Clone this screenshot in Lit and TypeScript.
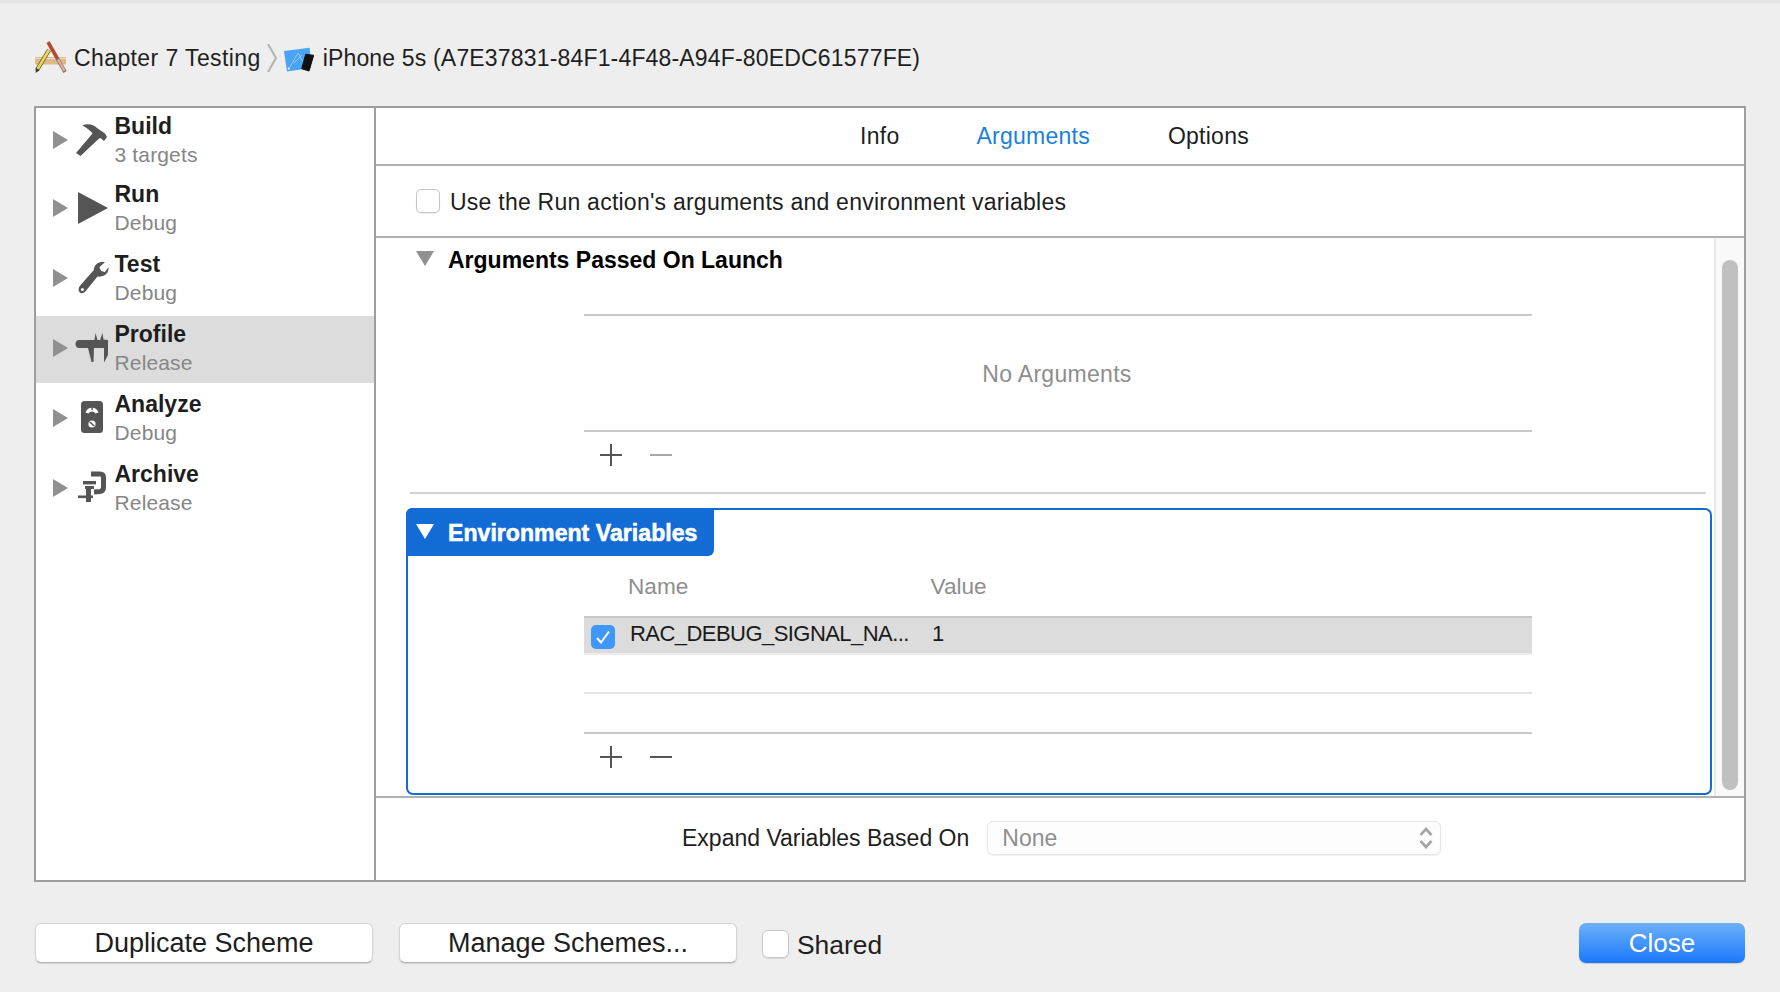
import { LitElement, html, css, svg } from "lit";
import { customElement } from "lit/decorators.js";

const DARK = "#555";
const icons: Record<string, unknown> = {
  build: svg`<path fill="${DARK}" d="M3 33 L19.5 13.5 C17 10 13 7.5 9.3 5.5 C14 3.2 20 4 24 8 L32 13.5 L34 17 L31 21 L27.5 18 L25.5 19 L7.5 36 Z"/>`,
  run: svg`<polygon fill="${DARK}" points="5,4 35,20 5,36"/>`,
  test: svg`<path transform="translate(1.5,2) scale(.92)" fill="${DARK}" d="M6 28 L21 11 C21 6 25 2 31 2 L33 2.5 L27 8 L29 12 L33 13 L37 8 C37.5 14 33 19 25 18 L12 34 C10 36.5 7 36.5 5.5 35 C4 33.5 4 30.5 6 28 Z"/><circle cx="9.4" cy="31.5" r="1.5" fill="#fff"/>`,
  profile: svg`<path fill="${DARK}" d="M6.5 12 H21.5 L22.5 5 L24.5 12 H27 L29.5 5 L30.5 11.5 L35 12 V27 L31 34.5 V20 H29 V20 H21 L20.5 34 H18.5 L15 20 H6.5 A4 4 0 0 1 6.5 12 Z"/><rect x="21" y="20" width="8" height="14" fill="#dcdcdc"/>`,
  analyze: svg`<rect x="8" y="3" width="22" height="32" rx="3.5" fill="${DARK}"/><path fill="#fff" d="M12.5 14.5 A6.8 6.8 0 0 1 25.5 14.5 L22.5 15.5 A4 4 0 0 0 15.5 15.5 Z"/><rect x="18.4" y="8" width="1.4" height="4" fill="${DARK}"/><circle cx="19" cy="26" r="3.6" fill="#fff"/><path d="M16.6 24 L21.4 28" stroke="${DARK}" stroke-width="1.5"/>`,
  archive: svg`<path fill="none" stroke="${DARK}" stroke-width="5" d="M18 6 H27 Q30.5 6 30.5 9.5 V19 Q30.5 23 27 23.5 L21 24"/><rect x="10" y="13" width="13" height="3.4" fill="${DARK}"/><rect x="12" y="18" width="9" height="3" fill="${DARK}"/><rect x="13" y="20" width="5" height="14" fill="${DARK}"/><rect x="5" y="27.5" width="15" height="2.6" fill="${DARK}"/>`,
};

const rows = [
  { id: "build", title: "Build", sub: "3 targets" },
  { id: "run", title: "Run", sub: "Debug" },
  { id: "test", title: "Test", sub: "Debug" },
  { id: "profile", title: "Profile", sub: "Release", selected: true },
  { id: "analyze", title: "Analyze", sub: "Debug" },
  { id: "archive", title: "Archive", sub: "Release" },
];

@customElement("app-root")
export class AppRoot extends LitElement {
  static styles = css`
    :host {
      display: block;
      width: 1780px;
      height: 992px;
      overflow: hidden;
      background: #eeeeee;
      font-family: "Liberation Sans", Arial, sans-serif;
      font-size: 23px;
      color: #1e1e1e;
    }
    * { box-sizing: border-box; }
    .strip { height: 3px; background: #e4e4e4; }
    .crumbs {
      height: 103px;
      padding: 37px 0 0 34px;
      display: flex;
      align-items: flex-start;
      line-height: 36px;
      white-space: nowrap;
    }
    .crumbs svg { display: block; flex: none; }
    .xc { width: 34px; height: 34px; margin: 1px 6px 0 0; }
    .chev { width: 10px; height: 28px; margin: 4px 7px 0 6px; }
    .bp { width: 30px; height: 26px; margin: 7px 9px 0 0; }
    .c1 { letter-spacing: 0.4px; }
    .c2 { letter-spacing: 0.17px; }

    .panel {
      margin-left: 34px;
      width: 1712px;
      height: 776px;
      border: 2px solid #9e9e9e;
      background: #fff;
      display: flex;
    }
    .side {
      width: 340px;
      flex: none;
      border-right: 2px solid #9e9e9e;
    }
    .row {
      height: 67px;
      margin-bottom: 3px;
      display: flex;
      align-items: center;
      padding-left: 17px;
    }
    .row:first-child { margin-bottom: 1px; }
    .row.on { background: #dcdcdc; }
    .row .tri { width: 15px; height: 18px; flex: none; margin-top: -2.8px; }
    .row .ic { width: 40px; height: 40px; flex: none; margin: -2.8px 0 0 5px; }
    .row .tx { margin: -3px 0 0 1.5px; display: flex; flex-direction: column; }
    .row b { font-size: 23px; line-height: 28px; color: #1e1e1e; }
    .row span { font-size: 21px; line-height: 28px; margin-top: 1px; color: #868686; letter-spacing: 0.15px; }

    .main { flex: 1; min-width: 0; display: flex; flex-direction: column; }
    .tabs {
      height: 58px;
      flex: none;
      border-bottom: 2px solid #b0b0b0;
      display: flex;
      justify-content: center;
      align-items: center;
      gap: 77px;
      padding-right: 11px;
      letter-spacing: 0.25px;
    }
    .tabs span:last-child { margin-left: 1px; }
    .tabs .on { color: #1b7fdc; }
    .use {
      height: 72px;
      flex: none;
      border-bottom: 2px solid #b0b0b0;
      display: flex;
      align-items: center;
      padding-left: 40px;
      gap: 10px;
    }
    .use span { letter-spacing: 0.24px; margin-top: 2px; }
    .box {
      width: 24px;
      height: 24px;
      flex: none;
      border-radius: 5px;
      background: #fff;
      border: 1.5px solid #c6c6c6;
      box-shadow: 0 1px 1px rgba(0,0,0,.08);
    }
    .scroll { height: 558px; flex: none; display: flex; }
    .content { flex: 1; min-width: 0; }
    .track {
      width: 30px;
      flex: none;
      background: #f9f9f9;
      border-left: 2px solid #e8e8e8;
      padding: 22px 0 0 6px;
    }
    .thumb { width: 16px; height: 530px; border-radius: 8px; background: #c0c0c0; }

    .shead {
      height: 44px;
      display: flex;
      align-items: center;
      padding-left: 40px;
      gap: 14px;
      font-weight: 700;
      color: #000;
    }
    .shead svg { width: 18px; height: 15px; flex: none; margin-top: -4px; }
    .tbl { margin-left: 208px; width: 948px; margin-top: 32px; }
    .empty {
      height: 118px;
      border-top: 2px solid #c8c8c8;
      border-bottom: 2px solid #c8c8c8;
      display: flex;
      align-items: center;
      justify-content: center;
      color: #8e8e8e;
      font-size: 23px;
      letter-spacing: 0.3px;
      padding: 3px 2px 0 0;
    }
    .pm { display: flex; gap: 28px; padding: 12px 0 0 16px; }
    .pm svg { width: 22px; height: 22px; display: block; }
    .div { margin: 26px 0 0 34px; width: 1296px; height: 2px; background: #d2d2d2; }

    .env {
      margin: 14px 0 0 30px;
      width: 1306px;
      height: 287px;
      border: 2px solid #136bd6;
      border-radius: 7px;
    }
    .ehead {
      margin: -2px 0 0 -2px;
      width: 308px;
      height: 48px;
      background: #136bd6;
      border-radius: 6px 0 6px 0;
      color: #fff;
      font-weight: 700;
      display: flex;
      align-items: center;
      padding-left: 10px;
      gap: 14px;
      letter-spacing: 0.07px;
      -webkit-text-stroke: 0.6px #fff;
    }
    .ehead svg { width: 18px; height: 15px; flex: none; margin-top: -2px; }
    .ehead span { margin-top: 3px; }
    .etbl { margin-left: 176px; width: 948px; }
    .cols {
      height: 60px;
      display: flex;
      align-items: center;
      color: #8e8e8e;
      font-size: 22.6px;
      padding-left: 44px;
    }
    .cols span { margin-top: 1px; }
    .cols span:first-child { width: 302.5px; }
    .var {
      height: 39px;
      border-top: 2px solid #c8c8c8;
      border-bottom: 2px solid #ededed;
      background: #dcdcdc;
      display: flex;
      align-items: center;
      padding-left: 7px;
      font-size: 22px;
      white-space: nowrap;
      color: #1a1a1a;
    }
    .chk {
      width: 24px;
      height: 24px;
      flex: none;
      margin: 3px 15px 0 0;
      border-radius: 5px;
      background: #3f97f7;
      display: flex;
      align-items: center;
      justify-content: center;
    }
    .chk svg { width: 16px; height: 16px; }
    .var .n { width: 302px; margin-top: -3px; letter-spacing: -0.55px; }
    .var .v { margin-top: -3px; }
    .l1 { margin-top: 37px; height: 2px; background: #e5e5e5; }
    .l2 { margin-top: 38px; height: 2px; background: #c8c8c8; }

    .foot {
      flex: 1;
      border-top: 2px solid #b0b0b0;
      display: flex;
      align-items: center;
      padding-left: 306px;
      gap: 18px;
      font-size: 23px;
    }
    .foot > span { margin-top: -1px; }
    .pick {
      width: 454px;
      height: 34px;
      margin-top: -2px;
      border: 1.5px solid #e6e6e6;
      border-radius: 6px;
      background: #fdfdfd;
      box-shadow: 0 1px 1px rgba(0,0,0,.06);
      display: flex;
      align-items: center;
      justify-content: space-between;
      padding: 0 7px 0 14px;
      color: #8e8e8e;
    }
    .pick svg { width: 14px; height: 22px; }

    .bottom {
      margin-top: 41px;
      display: flex;
      align-items: flex-start;
      padding: 0 35px;
      font-size: 27px;
      white-space: nowrap;
    }
    .btn {
      width: 338px;
      height: 40px;
      padding-top: 1px;
      background: #fff;
      border-radius: 6px;
      border: 1px solid #d4d4d4;
      border-bottom-color: #b4b4b4;
      box-shadow: 0 1px 1px rgba(0,0,0,.12);
      display: flex;
      align-items: center;
      justify-content: center;
      line-height: 1;
    }
    .btn + .btn { margin-left: 26px; }
    .sbox { width: 27px; height: 28px; margin: 7px 8px 0 25px; border-radius: 6px; }
    .shared { line-height: 44px; font-size: 26.4px; }
    .close {
      margin-left: auto;
      width: 166px;
      height: 40px;
      border-radius: 7px;
      background: linear-gradient(#6db0f8, #1a78fd);
      color: #fff;
      font-size: 26px;
      display: flex;
      align-items: center;
      justify-content: center;
      box-shadow: 0 1px 1px rgba(0,0,0,.15);
    }
  `;

  private plus(color = DARK) {
    return html`<svg viewBox="0 0 22 22"><path d="M11 0V22M0 11H22" stroke="${color}" stroke-width="2" fill="none"/></svg>`;
  }
  private minus(color = DARK) {
    return html`<svg viewBox="0 0 22 22"><path d="M0 11H22" stroke="${color}" stroke-width="2" fill="none"/></svg>`;
  }

  render() {
    return html`
      <div class="strip"></div>
      <div class="crumbs">
        <svg class="xc" viewBox="0 0 34 34">
          <rect x="1" y="16" width="31" height="7.5" fill="#dcb88c"/>
          <path d="M1 17.5H32" stroke="#efdcc2" stroke-width="1"/>
          <path d="M14 1 L31 31" stroke="#8a6a55" stroke-width="3.6"/>
          <path d="M14.5 2 L23 17" stroke="#c8402c" stroke-width="2.6"/>
          <path d="M24 18.5 L30.5 30" stroke="#d9b49a" stroke-width="2.4"/>
          <path d="M3 29 L15 9" stroke="#4a4a3c" stroke-width="4.2"/>
          <path d="M3.4 28.4 L15 9" stroke="#f0d84a" stroke-width="2.8"/>
          <path d="M1.5 32 L2 27 L5.5 29.2 Z" fill="#333"/>
        </svg>
        <span class="c1">Chapter 7 Testing</span>
        <svg class="chev" viewBox="0 0 10 28"><path d="M1 0 L9 14 L1 28" fill="none" stroke="#b2b2b2" stroke-width="2"/></svg>
        <svg class="bp" viewBox="0 0 30 26">
          <path d="M0 4 L25.7 .7 L27 21 L3 24.5 Z" fill="#4aa3f4"/>
          <path d="M6 20 L14 6 L21 18 M10 16 L18 8" stroke="#93ccf9" stroke-width="1" fill="none"/>
          <rect x="3.8" y="20.5" width="2" height="2" fill="#e8f4ff"/>
          <path d="M21.7 7.3 L29.7 8.3 L25 24 L17.7 21.7 Z" fill="#111" stroke="#111" stroke-width="1" stroke-linejoin="round"/>
        </svg>
        <span class="c2">iPhone 5s (A7E37831-84F1-4F48-A94F-80EDC61577FE)</span>
      </div>

      <div class="panel">
        <div class="side">
          ${rows.map(
            (r) => html`
              <div class="row ${r.selected ? "on" : ""}">
                <svg class="tri" viewBox="0 0 15 18"><polygon points="0,0 15,9 0,18" fill="#909090"/></svg>
                <svg class="ic" viewBox="0 0 40 40">${icons[r.id]}</svg>
                <div class="tx"><b>${r.title}</b><span>${r.sub}</span></div>
              </div>
            `
          )}
        </div>
        <div class="main">
          <div class="tabs"><span>Info</span><span class="on">Arguments</span><span>Options</span></div>
          <div class="use"><div class="box"></div><span>Use the Run action's arguments and environment variables</span></div>
          <div class="scroll">
            <div class="content">
              <div class="shead">
                <svg viewBox="0 0 18 15"><polygon points="0,0 18,0 9,15" fill="#909090"/></svg>
                <span>Arguments Passed On Launch</span>
              </div>
              <div class="tbl">
                <div class="empty">No Arguments</div>
                <div class="pm">${this.plus()}${this.minus("#a8a8a8")}</div>
              </div>
              <div class="div"></div>
              <div class="env">
                <div class="ehead">
                  <svg viewBox="0 0 18 15"><polygon points="0,0 18,0 9,15" fill="#fff"/></svg>
                  <span>Environment Variables</span>
                </div>
                <div class="etbl">
                  <div class="cols"><span>Name</span><span>Value</span></div>
                  <div class="var">
                    <div class="chk"><svg viewBox="0 0 16 16"><path d="M2 9 L6 13.5 L14 2.5" fill="none" stroke="#fff" stroke-width="2"/></svg></div>
                    <span class="n">RAC_DEBUG_SIGNAL_NA...</span><span class="v">1</span>
                  </div>
                  <div class="l1"></div>
                  <div class="l2"></div>
                  <div class="pm">${this.plus()}${this.minus()}</div>
                </div>
              </div>
            </div>
            <div class="track"><div class="thumb"></div></div>
          </div>
          <div class="foot">
            <span>Expand Variables Based On</span>
            <div class="pick">
              <span>None</span>
              <svg viewBox="0 0 14 22"><path d="M1.5 8 L7 2 L12.5 8 M1.5 14 L7 20 L12.5 14" fill="none" stroke="#a5a5a5" stroke-width="2.6"/></svg>
            </div>
          </div>
        </div>
      </div>

      <div class="bottom">
        <div class="btn">Duplicate Scheme</div>
        <div class="btn">Manage Schemes...</div>
        <div class="box sbox"></div>
        <span class="shared">Shared</span>
        <div class="close">Close</div>
      </div>
    `;
  }
}
